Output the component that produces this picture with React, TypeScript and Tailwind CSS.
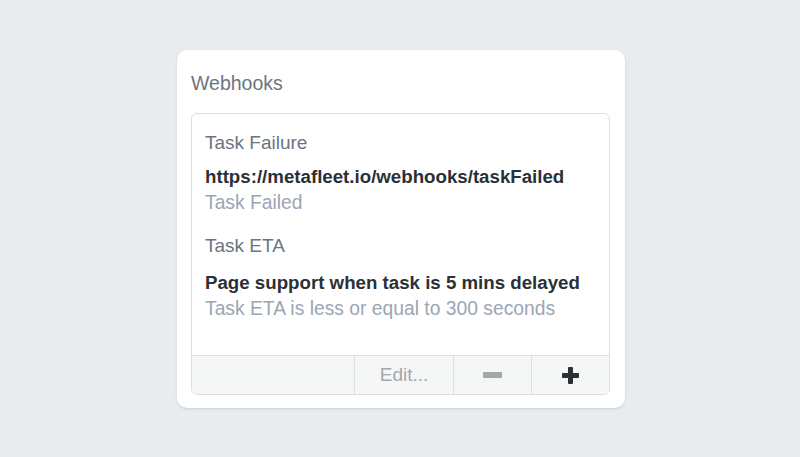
const HOOKS = [
  {
    name: "Task Failure",
    target: "https://metafleet.io/webhooks/taskFailed",
    trigger: "Task Failed",
  },
  {
    name: "Task ETA",
    target: "Page support when task is 5 mins delayed",
    trigger: "Task ETA is less or equal to 300 seconds",
  },
];

export default function App() {
  return (
    <div className="w-full h-[457px] bg-[#e9ecef] flex items-start justify-center pt-[50px] pl-[2px] font-['Liberation_Sans',Arial,sans-serif]">
      <div className="w-[448px] bg-white rounded-[10px] pl-[14px] pr-[15px] pb-[13px] shadow-sm">
        <h2 className="h-[63px] flex items-center pt-[4px] text-[19.5px] text-[#6c7580]">Webhooks</h2>

        <div className="border border-[#dcdfe2] rounded-[6px] overflow-hidden">
          <div className="h-[241px] px-[13px] pt-[17px]">
            {HOOKS.map((hook, i) => (
              <div key={hook.name} className={i > 0 ? "mt-[19px]" : ""}>
                <p className="text-[19px] leading-[24px] text-[#6c7580]">{hook.name}</p>
                <p className={`${i > 0 ? "mt-[12px]" : "mt-[9px]"} text-[18.7px] leading-[25px] font-bold text-[#2b3037]`}>
                  {hook.target}
                </p>
                <p className="mt-[1px] text-[19.3px] leading-[25px] text-[#9aa6b6]">{hook.trigger}</p>
              </div>
            ))}
          </div>

          {/* toolbar */}
          <div className="h-[39px] flex bg-[#f5f6f6] border-t border-[#dcdfe2]">
            <div className="w-[163px] border-r border-[#dcdfe2]" />
            <button className="w-[99px] border-r border-[#dcdfe2] text-[19px] text-[#a3a7ab]">Edit...</button>
            <button className="w-[78px] border-r border-[#dcdfe2] flex items-center justify-center">
              <svg width="19" height="6" viewBox="0 0 19 6">
                <rect width="19" height="6" rx="1" fill="#a3a7ab" />
              </svg>
            </button>
            <button className="flex-1 flex items-center justify-center">
              <svg width="17" height="17" viewBox="0 0 17 17" fill="#2b3037">
                <rect x="6" y="0" width="5" height="17" rx="1" />
                <rect x="0" y="6" width="17" height="5" rx="1" />
              </svg>
            </button>
          </div>
        </div>
      </div>
    </div>
  );
}
